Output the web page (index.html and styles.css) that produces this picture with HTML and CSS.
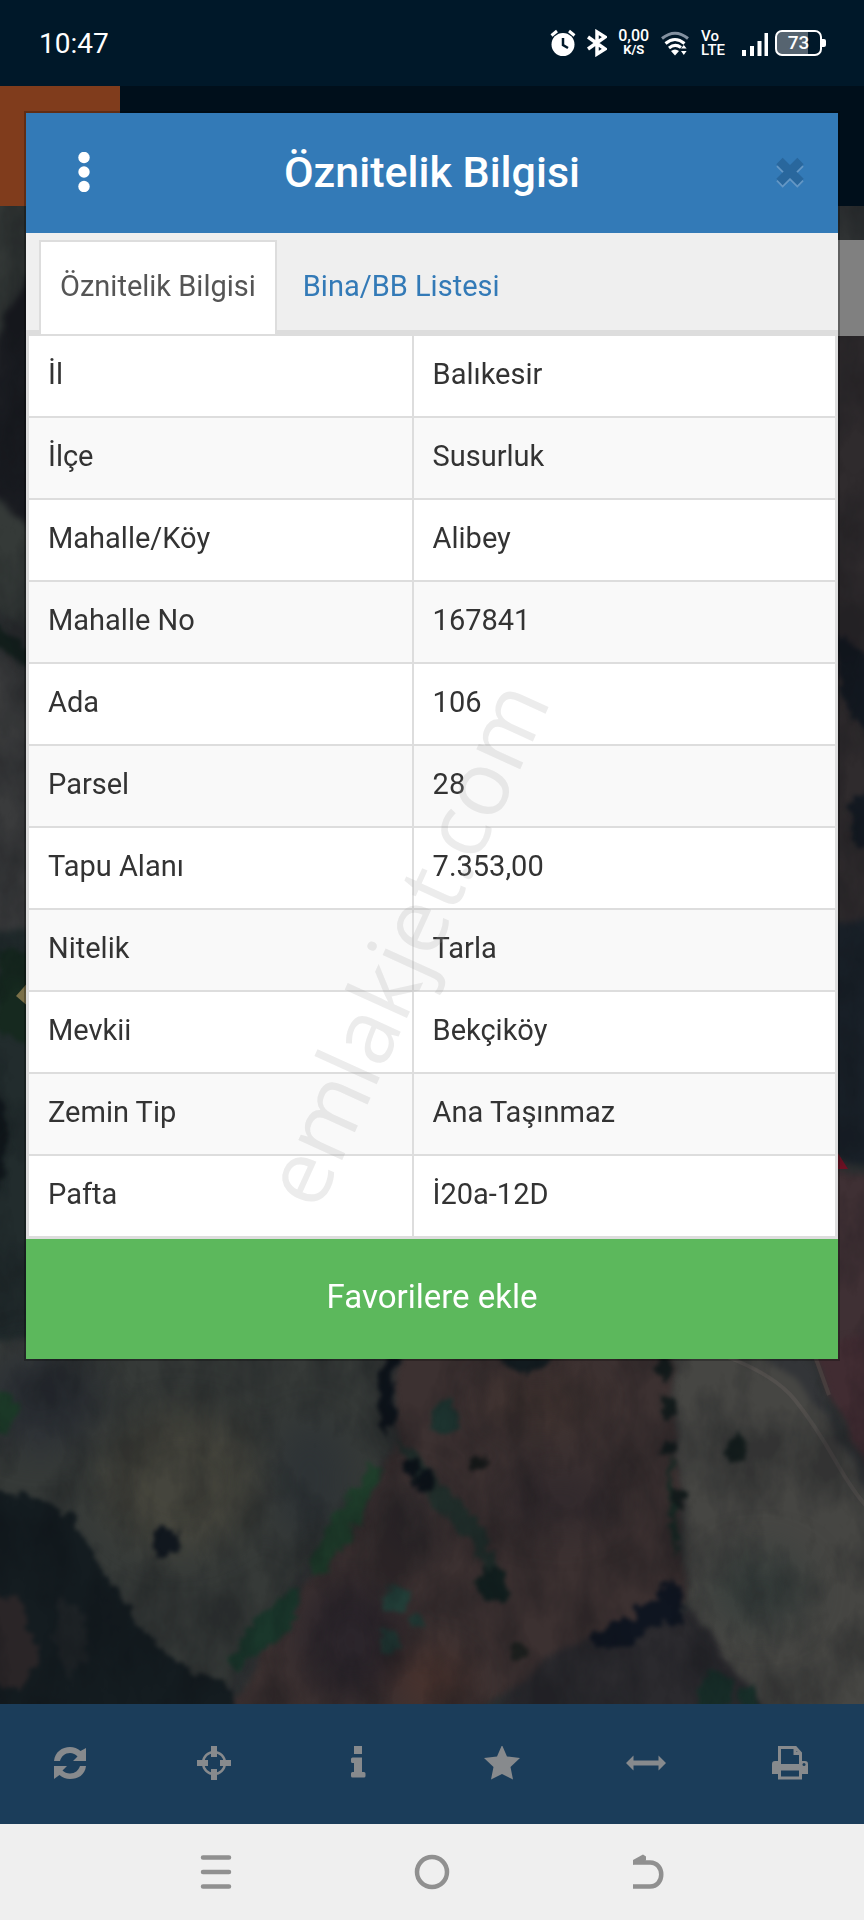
FILE: index.html
```html
<!DOCTYPE html>
<html lang="tr">
<head>
  <meta charset="UTF-8">
  <meta name="viewport" content="width=device-width, initial-scale=1">
  <title>Öznitelik Bilgisi</title>
  <link rel="stylesheet" href="styles.css">
</head>
<body>

  <div class="status-bar">
    <span class="clock">10:47</span>
    <div class="status-icons">
      <svg width="26" height="28" viewBox="0 0 26 28">
        <circle cx="13" cy="15.500" r="11.500" fill="#fff"/>
        <path d="M1.500 6.500 7 2M24.500 6.500 19 2" stroke="#fff" stroke-width="3" fill="none"/>
        <path d="M13 9v7l5 3" stroke="#001829" stroke-width="2.500" fill="none"/>
      </svg>
      <svg class="bluetooth" width="20" height="28" viewBox="0 0 20 28">
        <path d="M1 8 18 20 10 25V3L18 8 1 20" stroke="#fff" stroke-width="3.500" fill="none"/>
      </svg>
      <div class="speed"><b>0,00</b><small>K/S</small></div>
      <svg width="30" height="28" viewBox="0 0 30 28">
        <path d="M2 9.500Q15-1 28 9.500" stroke="#8391a0" stroke-width="3" fill="none"/>
        <path d="M5.500 14.500Q15 6.500 24.500 14.500M9 19Q15 14 21 18.500" stroke="#fff" stroke-width="3" fill="none"/>
        <path d="M11 22q4-3 8 0l-4 4.500zM21 19.500l2.800-3.500 2.800 3.500zM21 22h5.600l-2.800 4z" fill="#fff"/>
      </svg>
      <div class="volte"><span>Vo</span><span>LTE</span></div>
      <svg class="signal" width="26" height="28" viewBox="0 0 26 28">
        <path d="M2 21v6M10 17v10M17.500 12v15M24.500 4v23" stroke="#fff" stroke-width="4"/>
      </svg>
      <div class="battery"><span>73</span></div>
    </div>
  </div>

  <div class="app">
    <div class="app-header"><div class="app-menu"></div></div>

    <div class="map">
      <svg class="map-image" viewBox="0 206 864 1498" preserveAspectRatio="xMidYMax slice" color-interpolation-filters="sRGB">
        <defs>
          <filter id="field" x="-10%" y="-10%" width="120%" height="120%">
            <feTurbulence type="fractalNoise" baseFrequency="0.03" numOctaves="3" seed="4" result="n"/>
            <feDisplacementMap in="SourceGraphic" in2="n" scale="16" xChannelSelector="R" yChannelSelector="G"/>
            <feGaussianBlur stdDeviation="3"/>
          </filter>
          <filter id="trees" x="-20%" y="-20%" width="140%" height="140%">
            <feTurbulence type="fractalNoise" baseFrequency="0.09" numOctaves="3" seed="9" result="n"/>
            <feDisplacementMap in="SourceGraphic" in2="n" scale="18" xChannelSelector="R" yChannelSelector="G"/>
            <feGaussianBlur stdDeviation="2"/>
          </filter>
          <filter id="patch" x="-50%" y="-50%" width="200%" height="200%"><feGaussianBlur stdDeviation="18"/></filter>
          <filter id="grain" x="0" y="0" width="100%" height="100%">
            <feTurbulence type="fractalNoise" baseFrequency="0.022 0.012" numOctaves="5" seed="3"/>
            <feColorMatrix values="0 0 0 0 0.040  0 0 0 0 0.050  0 0 0 0 0.070  0 2.400 0 0 -0.850"/>
          </filter>
        </defs>
        <rect y="206" width="864" height="1498" fill="#2f3233"/>

        <!-- left and right edges -->
        <g filter="url(#field)">
          <path d="M-20 200H60V640L-20 600z" fill="#353a38"/>
          <path d="M30 270Q0 310-10 380L-10 490 40 540z" fill="#1b1d22"/>
          <path d="M-20 640 50 680V940H-20z" fill="#3a3b3c"/>
          <path d="M-20 930H60V1360H-20z" fill="#222c2d"/>
          <path d="M820 330H880V920H820z" fill="#2f2b2d"/>
          <path d="M820 920H880V1170L820 1150z" fill="#1b232b"/>
          <path d="M820 1165 880 1180V1500L820 1370z" fill="#3f3034"/>
        </g>
        <g filter="url(#trees)">
          <path d="M-10 620 45 660V680L-10 640z" fill="#15241f"/>
          <path d="M0 945 40 955V1050L-5 1030z" fill="#16291f"/>
          <path d="M-10 1080Q15 1110 5 1180L-10 1200z" fill="#11181c"/>
          <path d="M836 630 870 660V740L838 690zM850 800 870 790V850L850 840z" fill="#141a22"/>
        </g>
        <path d="M16 996 30 980V1008z" fill="#7b7048"/>
        <path d="M836 1150 848 1169H836z" fill="#7c1226"/>

        <!-- fields -->
        <g filter="url(#field)">
          <path d="M-20 1340H385L390 1450 310 1560 230 1680 180 1690 80 1570-20 1490z" fill="#363a38"/>
          <path d="M400 1340H670L685 1600 600 1650 450 1720H220L310 1580 395 1450z" fill="#3c3131"/>
          <path d="M672 1340H760L810 1395 880 1500V1720H770L690 1620z" fill="#464643"/>
          <path d="M750 1340H800L840 1440 880 1480V1510L810 1395z" fill="#333538"/>
          <path d="M810 1340H880V1480L845 1430z" fill="#412c32"/>
          <path d="M560 1650 690 1610 770 1720H480z" fill="#2b2a2e"/>
        </g>
        <g filter="url(#patch)">
          <ellipse cx="180" cy="1480" rx="80" ry="70" fill="#4a483e" opacity=".8"/>
          <ellipse cx="40" cy="1400" rx="60" ry="50" fill="#2c3035"/>
          <ellipse cx="310" cy="1480" rx="40" ry="60" fill="#2b3135" opacity=".7"/>
          <ellipse cx="350" cy="1640" rx="50" ry="60" fill="#272229" opacity=".8"/>
          <ellipse cx="430" cy="1680" rx="40" ry="30" fill="#4e332c" opacity=".7"/>
          <ellipse cx="560" cy="1500" rx="60" ry="30" fill="#2d272b" opacity=".7"/>
          <ellipse cx="540" cy="1400" rx="60" ry="30" fill="#453531" opacity=".6"/>
          <ellipse cx="410" cy="1520" rx="30" ry="40" fill="#2c282b" opacity=".7"/>
          <ellipse cx="760" cy="1590" rx="50" ry="40" fill="#343d3b" opacity=".8"/>
        </g>

        <!-- road -->
        <path d="M725 1356Q775 1375 795 1400T835 1460 870 1510" stroke="#565350" stroke-width="4" fill="none" opacity=".8"/>
        <path d="M815 1356 829 1395" stroke="#514744" stroke-width="4" fill="none" opacity=".6"/>

        <!-- hedges and trees -->
        <g filter="url(#trees)">
          <path d="M-20 1490 30 1495 70 1515 105 1575 150 1640 180 1665 230 1685 240 1720H-20z" fill="#141c20"/>
          <path d="M-20 1590 20 1600 40 1660 20 1690-20 1680z" fill="#2a2527"/>
          <path d="M60 1600 80 1610 90 1650 70 1680 55 1640z" fill="#1e2326"/>
          <path d="M370 1465 382 1470 350 1540 318 1578 310 1570 325 1530z" fill="#1f3e2b"/>
          <path d="M290 1588 302 1590 290 1630 235 1672 228 1660 255 1620z" fill="#1a372b"/>
          <path d="M-5 1390 20 1400 8 1440-5 1430z" fill="#1c3a28"/>
          <path d="M388 1355H402L395 1372 390 1390 396 1420 386 1435 380 1410 378 1380z" fill="#0d131a"/>
          <path d="M390 1430 430 1470 450 1490 485 1530 490 1550 500 1570 485 1575 470 1540 430 1500z" fill="#22302c"/>
          <path d="M672 1440 678 1540 674 1555 668 1500z" fill="#172c25"/>
          <ellipse cx="165" cy="1542" rx="15" ry="15" fill="#11171e"/>
          <ellipse cx="410" cy="1468" rx="8" ry="9" fill="#0c1218"/>
          <ellipse cx="425" cy="1482" rx="10" ry="12" fill="#0c1218"/>
          <ellipse cx="480" cy="1463" rx="8" ry="8" fill="#151818"/>
          <ellipse cx="493" cy="1585" rx="16" ry="18" fill="#12201f"/>
          <ellipse cx="518" cy="1651" rx="8" ry="9" fill="#1d201e"/>
          <ellipse cx="736" cy="1449" rx="12" ry="14" fill="#16211f"/>
          <ellipse cx="664" cy="1368" rx="8" ry="13" fill="#141c1c"/>
          <ellipse cx="667" cy="1408" rx="9" ry="13" fill="#141c1c"/>
          <ellipse cx="669" cy="1447" rx="7" ry="8" fill="#141c1c"/>
          <ellipse cx="678" cy="1499" rx="7" ry="8" fill="#141c1c"/>
          <ellipse cx="672" cy="1604" rx="12" ry="21" fill="#0f1520"/>
          <ellipse cx="650" cy="1615" rx="15" ry="15" fill="#0f1520"/>
          <ellipse cx="624" cy="1634" rx="21" ry="15" fill="#0f1520"/>
          <ellipse cx="602" cy="1641" rx="9" ry="10" fill="#0f1520"/>
          <ellipse cx="525" cy="1363" rx="25" ry="9" fill="#131c20"/>
          <ellipse cx="445" cy="1418" rx="14" ry="18" fill="#1d332f"/>
          <ellipse cx="396" cy="1600" rx="14" ry="14" fill="#24423b"/>
          <ellipse cx="390" cy="1642" rx="11" ry="12" fill="#223b36"/>
          <ellipse cx="417" cy="1622" rx="8" ry="7" fill="#223b36"/>
          <ellipse cx="715" cy="1692" rx="18" ry="22" fill="#18302a"/>
          <ellipse cx="748" cy="1698" rx="10" ry="12" fill="#18302a"/>
        </g>
        <rect y="206" width="864" height="1498" filter="url(#grain)" opacity=".3"/>
      </svg>
      <div class="map-tool"></div>
    </div>

    <div class="toolbar">
      <button type="button" aria-label="Yenile">
        <svg width="34" height="34" viewBox="0 0 34 34" fill="currentColor">
          <path d="M1 15C2 6 9 1 17 1c4 0 7.500 1.500 10.500 4L33 2v13H20l4.500-4.500C22.500 8.500 20 7 17 7c-5 0-8.500 3-10 8z"/>
          <path d="M33 20c-1 9-8 13-16 13-4 0-7.500-1.500-10.500-4L1 33V20h13l-4.500 4.500C11.500 26.500 14 27.500 17 27.500c5 0 8.500-3 10-7.500z"/>
        </svg>
      </button>
      <button type="button" aria-label="Konum">
        <svg width="34" height="34" viewBox="0 0 34 34" fill="none" stroke="currentColor">
          <circle cx="17" cy="17" r="11" stroke-width="2.500"/>
          <path d="M17 0v11M17 23v11M0 17h11M23 17h11" stroke-width="6"/>
        </svg>
      </button>
      <button type="button" aria-label="Bilgi">
        <svg width="34" height="34" viewBox="0 0 34 34" fill="currentColor">
          <path d="M13 0h8v8h-8zM10 13q0-1.500 1.500-1.500H21V26h2q1.500 0 1.500 1.500V30q0 1.500-1.500 1.500H11.500Q10 31.500 10 30v-2.500Q10 26 11.500 26H13v-9h-1.500Q10 17 10 15.500z"/>
        </svg>
      </button>
      <button type="button" aria-label="Favoriler">
        <svg width="36" height="34" viewBox="0 0 36 34" fill="currentColor">
          <path d="M18-1 23 10.500 36 12 26.500 21 29 33.500 18 28 7 33.500 9.500 21 0 12 13 10.500z"/>
        </svg>
      </button>
      <button type="button" aria-label="Ölçüm">
        <svg width="40" height="34" viewBox="0 0 40 34" fill="currentColor">
          <path d="M0 17 7.500 9.500V14.500H32.500V9.500L40 17l-7.500 7.500V19.500H7.500v5z"/>
        </svg>
      </button>
      <button type="button" aria-label="Yazdır">
        <svg width="36" height="34" viewBox="0 0 36 34">
          <path d="M7.500 19V1.500H23.500L28.500 7V19M23 1.500V7.500H28.500" fill="none" stroke="currentColor" stroke-width="3"/>
          <path d="M0 28V18q0-3 3-3H6v3H30V15h3q3 0 3 3V28H30V24.500H6V28z" fill="currentColor"/>
          <path d="M7.500 24V32H28.500V24" fill="none" stroke="currentColor" stroke-width="3"/>
          <circle cx="32" cy="18.500" r="1.500" fill="#1b3d5a"/>
        </svg>
      </button>
    </div>
  </div>

  <div class="dialog" role="dialog" aria-labelledby="dialogTitle">
    <div class="dialog-header">
      <button class="icon-button" type="button" aria-label="Menü">
        <svg width="12" height="40" viewBox="0 0 12 40" fill="#fff">
          <circle cx="6" cy="5.500" r="5.700"/><circle cx="6" cy="20" r="5.700"/><circle cx="6" cy="34.500" r="5.700"/>
        </svg>
      </button>
      <h1 id="dialogTitle">Öznitelik Bilgisi</h1>
      <button class="icon-button close" type="button" aria-label="Kapat">
        <svg width="30" height="34" viewBox="0 0 30 34" stroke-width="9" stroke-linejoin="round">
          <path d="M4.500 8.500 25.500 29.500M25.500 8.500 4.500 29.500" stroke="#6497c5"/>
          <path d="M4.500 6 25.500 27M25.500 6 4.500 27" stroke="#29679d"/>
        </svg>
      </button>
    </div>

    <div class="tabs">
      <a class="tab active" href="#oznitelik">Öznitelik Bilgisi</a>
      <a class="tab" href="#bina">Bina/BB Listesi</a>
    </div>

    <table class="attributes" id="oznitelik">
      <tbody>
        <tr><th scope="row">İl</th><td>Balıkesir</td></tr>
        <tr><th scope="row">İlçe</th><td>Susurluk</td></tr>
        <tr><th scope="row">Mahalle/Köy</th><td>Alibey</td></tr>
        <tr><th scope="row">Mahalle No</th><td>167841</td></tr>
        <tr><th scope="row">Ada</th><td>106</td></tr>
        <tr><th scope="row">Parsel</th><td>28</td></tr>
        <tr><th scope="row">Tapu Alanı</th><td>7.353,00</td></tr>
        <tr><th scope="row">Nitelik</th><td>Tarla</td></tr>
        <tr><th scope="row">Mevkii</th><td>Bekçiköy</td></tr>
        <tr><th scope="row">Zemin Tip</th><td>Ana Taşınmaz</td></tr>
        <tr><th scope="row">Pafta</th><td>İ20a-12D</td></tr>
      </tbody>
    </table>

    <button class="favorite" type="button">Favorilere ekle</button>
  </div>

  <svg class="watermark" viewBox="0 0 864 1920">
    <text transform="translate(318 1213) rotate(-65.500)">emlakjet.com</text>
  </svg>

  <div class="nav-bar">
    <button type="button" aria-label="Son uygulamalar">
      <svg width="32" height="36" viewBox="0 0 32 36" fill="none" stroke="currentColor" stroke-width="4.500" stroke-linecap="round">
        <path d="M3 3.500H29M3 18H29M3 32.500H29"/>
      </svg>
    </button>
    <button type="button" aria-label="Ana ekran">
      <svg width="36" height="36" viewBox="0 0 36 36" fill="none" stroke="currentColor" stroke-width="4.500">
        <circle cx="18" cy="18" r="15"/>
      </svg>
    </button>
    <button type="button" aria-label="Geri">
      <svg width="32" height="36" viewBox="0 0 32 36" fill="none" stroke="currentColor" stroke-width="4.500">
        <path d="M1 8.500H18C33 8.500 33 32.500 18 32.500H1"/>
        <path d="M1 10.500V6L11 .5 14 2.500V6.500z" fill="currentColor" stroke="none"/>
      </svg>
    </button>
  </div>

</body>
</html>
```

FILE: styles.css
```css
* {
  box-sizing: border-box;
}

body {
  position: relative;
  display: flex;
  flex-direction: column;
  min-height: 100vh;
  margin: 0;
  font-family: Roboto, sans-serif;
  font-size: 29px;
  color: #333;
}

button {
  margin: 0;
  padding: 0;
  border: none;
  background: none;
  font-family: inherit;
  color: inherit;
  cursor: pointer;
}

svg {
  display: block;
}

/* phone status bar */
.status-bar {
  display: flex;
  justify-content: space-between;
  align-items: center;
  height: 86px;
  padding: 0 38px 0 39px;
  background: #001829;
  color: #fff;
}

.clock {
  font-size: 28px;
}

.status-icons {
  display: flex;
  align-items: center;
  gap: 11px;
}

.speed,
.volte {
  display: flex;
  flex-direction: column;
  font-size: 15px;
  font-weight: 500;
  line-height: 14px;
}

.speed {
  align-items: center;
}

.speed b {
  font-size: 16px;
  font-weight: 500;
}

.speed small {
  font-size: 13px;
  font-weight: 700;
}

.signal {
  margin-left: 6px;
}

.battery {
  position: relative;
  width: 47px;
  height: 26px;
  margin-left: -4px;
  margin-right: 4px;
  border: 2px solid #fff;
  border-radius: 7px;
  background: linear-gradient(to right, #566470 73%, transparent 73%);
  font-size: 19px;
  font-weight: 500;
  line-height: 22px;
  text-align: center;
}

.battery::after {
  content: "";
  position: absolute;
  top: 7px;
  right: -6px;
  width: 4px;
  height: 8px;
  border-radius: 0 2px 2px 0;
  background: #fff;
}

/* map application */
.app {
  display: flex;
  flex: 1;
  flex-direction: column;
}

.app-header {
  display: flex;
  height: 120px;
  background: #000f1b;
}

.app-menu {
  width: 120px;
  background: #803c1c;
}

.map {
  position: relative;
  flex: 1;
  overflow: hidden;
  background: #2d3032;
}

.map-image {
  position: absolute;
  inset: 0;
  width: 100%;
  height: 100%;
}

.map-tool {
  position: absolute;
  top: 34px;
  right: 0;
  width: 96px;
  height: 96px;
  background: #808080;
}

.toolbar {
  display: flex;
  height: 120px;
  background: #1b3d5a;
  color: #878a8d;
}

.toolbar button {
  display: flex;
  flex: 1;
  align-items: center;
  justify-content: center;
  padding: 0 4px 2px 0;
}

/* dialog */
.dialog {
  position: absolute;
  top: 113px;
  left: 26px;
  right: 26px;
  background: #fff;
  box-shadow: 0 0 0 2px rgba(0, 0, 0, 0.25);
}

.dialog-header {
  display: flex;
  align-items: center;
  height: 120px;
  padding-bottom: 3px;
  background: #337ab7;
  color: #fff;
}

.dialog-header h1 {
  flex: 1;
  margin: 0;
  font-size: 43px;
  font-weight: 500;
  text-align: center;
}

.icon-button {
  display: flex;
  align-items: center;
  justify-content: center;
  width: 116px;
  height: 96px;
}

.close {
  padding-left: 20px;
}

.tabs {
  display: flex;
  gap: 5px;
  height: 101px;
  padding: 7px 13px 0;
  border-bottom: 4px solid #ddd;
  background: #efefef;
}

.tab {
  height: 94px;
  padding: 0 19px;
  border: 2px solid transparent;
  border-bottom: none;
  color: #337ab7;
  line-height: 88px;
  text-decoration: none;
}

.tab.active {
  border-color: #ddd;
  background: #fff;
  color: #555;
}

.attributes {
  width: 100%;
  border: 3px solid #ddd;
  border-top-width: 2px;
  border-collapse: collapse;
  table-layout: fixed;
}

.attributes th,
.attributes td {
  height: 82px;
  padding: 0 19px 4px;
  border: 2px solid #ddd;
  font-weight: 400;
  text-align: left;
}

.attributes th {
  width: 47.6%;
}

.attributes tr:nth-child(even) {
  background: #f9f9f9;
}

.favorite {
  display: block;
  width: 100%;
  height: 120px;
  padding-bottom: 4px;
  background: #5cb85c;
  color: #fff;
  font-size: 33px;
}

.watermark {
  position: absolute;
  inset: 0;
  width: 100%;
  height: 100%;
  pointer-events: none;
}

.watermark text {
  font-family: "Open Sans", sans-serif;
  font-size: 90px;
  fill: rgba(160, 160, 160, 0.2);
}

/* phone navigation */
.nav-bar {
  display: flex;
  height: 96px;
  padding: 0 12.5%;
  background: #efefef;
  color: #909090;
}

.nav-bar button {
  display: flex;
  flex: 1;
  align-items: center;
  justify-content: center;
}
```
